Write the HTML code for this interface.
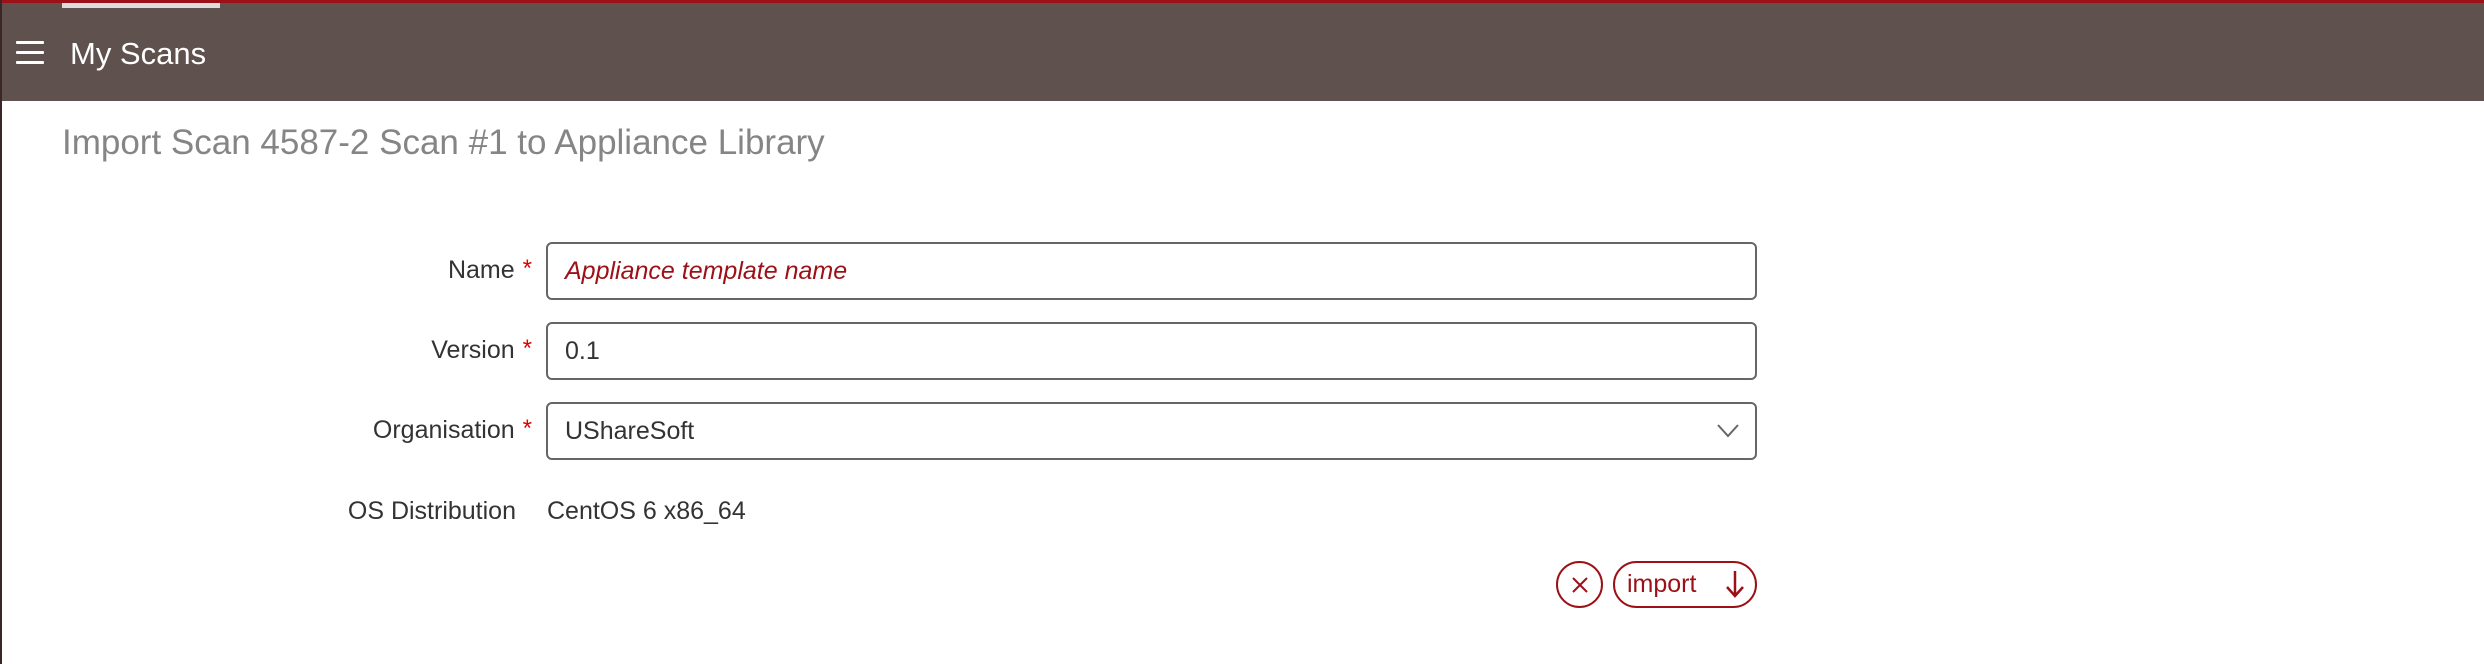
<!DOCTYPE html>
<html><head><meta charset="utf-8"><style>
*{margin:0;padding:0;box-sizing:border-box}
body{width:2484px;height:664px;background:#fff;font-family:"Liberation Sans",Helvetica,Arial,sans-serif;position:relative;overflow:hidden}
.lb{position:absolute;left:0;top:0;width:2px;height:664px;background:#3a2626;z-index:2}
.hdr{position:absolute;left:0;top:0;width:2484px;height:101px;background:#5f514d;border-top:3px solid #9b1117}
.tab{position:absolute;left:62px;top:0;width:158px;height:5px;background:#ddd}
.hb{position:absolute;left:16px;width:28px;height:3px;background:#fff;border-radius:1px}
.ttl{position:absolute;left:70px;top:33px;color:#fff;font-size:31px}
.h1{position:absolute;left:62px;top:123px;font-size:35px;color:#858585}
.lbl{position:absolute;right:1952px;font-size:25px;color:#333;text-align:right;white-space:nowrap}
.lbl span{color:#d00;font-size:24px;position:relative;top:-2px;margin-left:8px}
.inp{position:absolute;left:546px;width:1211px;height:58px;border:2px solid #666;border-radius:6px;font-size:25px;color:#333;padding-left:17px;line-height:54px}
.btn{position:absolute;top:561px;height:47px;border:2px solid #9b1117;border-radius:24px;color:#9b1117}
</style></head><body>
<div class="lb"></div>
<div class="hdr"><div class="tab"></div>
<div class="hb" style="top:38px"></div><div class="hb" style="top:48px"></div><div class="hb" style="top:58px"></div>
<div class="ttl">My Scans</div></div>
<div class="h1">Import Scan 4587-2 Scan #1 to Appliance Library</div>
<div class="lbl" style="top:256px">Name<span>*</span></div>
<div class="inp" style="top:242px;color:#9b1117;font-style:italic">Appliance template name</div>
<div class="lbl" style="top:336px">Version<span>*</span></div>
<div class="inp" style="top:322px">0.1</div>
<div class="lbl" style="top:416px">Organisation<span>*</span></div>
<div class="inp" style="top:402px">UShareSoft
<svg style="position:absolute;right:16px;top:20px" width="22" height="14" viewBox="0 0 22 14"><path d="M1 1 L11 12 L21 1" fill="none" stroke="#666" stroke-width="2"/></svg></div>
<div class="lbl" style="top:497px;right:1968px">OS Distribution</div>
<div style="position:absolute;left:547px;top:497px;font-size:25px;color:#333">CentOS 6 x86_64</div>
<div class="btn" style="left:1556px;width:47px">
<svg style="position:absolute;left:13px;top:13px" width="18" height="18" viewBox="0 0 18 18"><path d="M2 2L16 16M16 2L2 16" stroke="#9b1117" stroke-width="2"/></svg></div>
<div class="btn" style="left:1613px;width:144px"><span style="position:absolute;left:12px;top:7px;font-size:25px">import</span>
<svg style="position:absolute;left:110px;top:7px" width="20" height="28" viewBox="0 0 20 28"><path d="M10 1V25M2 17L10 26L18 17" fill="none" stroke="#9b1117" stroke-width="2.5"/></svg></div>
</body></html>
